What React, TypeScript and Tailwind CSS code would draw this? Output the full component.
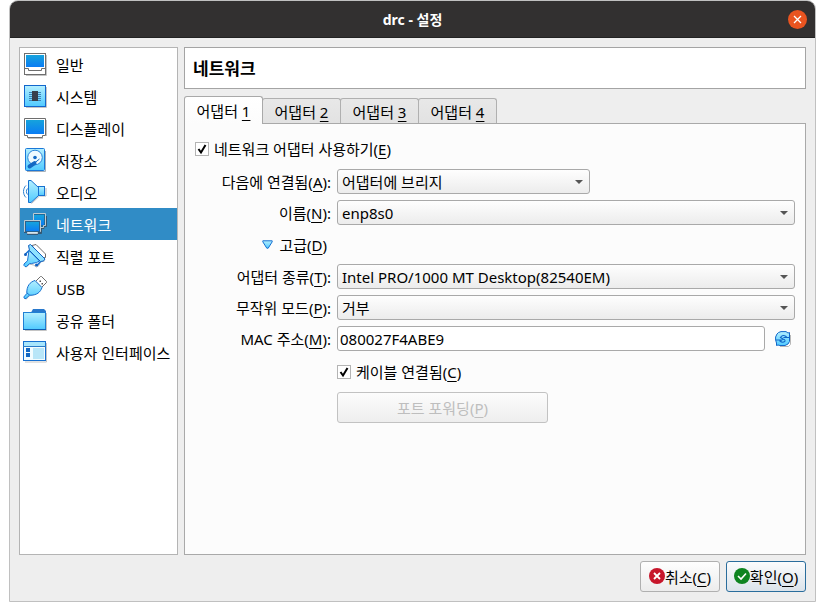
import type { ReactNode } from "react";

function Svg({ children }: { children: ReactNode }) {
  return (
    <svg viewBox="0 0 24 24" className="size-6 shrink-0" aria-hidden="true">
      {children}
    </svg>
  );
}

function Gradients() {
  return (
    <svg className="absolute size-0" aria-hidden="true">
      <defs>
        <linearGradient id="screen" x1="0" y1="0" x2="0" y2="1">
          <stop offset="0" stopColor="#16a3dc" />
          <stop offset="1" stopColor="#0a7cf4" />
        </linearGradient>
        <linearGradient id="ice" x1="0" y1="0" x2="0" y2="1">
          <stop offset="0" stopColor="#b4efff" />
          <stop offset="1" stopColor="#50caff" />
        </linearGradient>
      </defs>
    </svg>
  );
}

const GeneralIcon = () => (
  <Svg>
    <path d="M23.5 3v20.5H3" fill="none" stroke="#c4c4c4" />
    <rect x="1.5" y="1.5" width="21" height="21" fill="#fff" stroke="#6e6e6e" />
    <rect x="3" y="3" width="18" height="12" fill="url(#screen)" />
    <path d="M2 16.5h3.5v2h13v-2H22" fill="none" stroke="#6e6e6e" />
  </Svg>
);

const SystemIcon = () => (
  <Svg>
    <path d="M23.5 3v20.5H3" fill="none" stroke="#c4c4c4" />
    <rect x="1.5" y="1.5" width="21" height="21" fill="url(#ice)" stroke="#1266cc" />
    <path d="M6 8.5h12M6 10.5h12M6 12.5h12M6 14.5h12M6 16.5h12" stroke="#3b82b8" />
    <rect x="9" y="7" width="6" height="10" fill="#383f4d" />
  </Svg>
);

const DisplayIcon = () => (
  <Svg>
    <path d="M23.5 4v16M5 22.5h15" fill="none" stroke="#c4c4c4" />
    <path d="M1.5 2.5h21v17h-3v2h-15v-2h-3z" fill="#fff" stroke="#6e6e6e" />
    <rect x="3" y="4" width="18" height="14" fill="url(#screen)" />
  </Svg>
);

const StorageIcon = () => (
  <Svg>
    <path d="M22.5 3v20.5H4" fill="none" stroke="#a8b0b8" />
    <rect x="2.5" y="0.5" width="19" height="22" rx="1" fill="url(#ice)" stroke="#1a78d8" />
    <circle cx="12" cy="9.5" r="7.3" fill="#eefaff" stroke="#2a84d8" />
    <circle cx="12" cy="9.5" r="1.8" fill="#1268c4" />
    <path d="m16.5 11-5 4" stroke="#1268c4" fill="none" />
    <path d="m11.5 15.200-5 3.300" stroke="#1268c4" strokeWidth="4" strokeLinecap="round" />
  </Svg>
);

const AudioIcon = () => (
  <Svg>
    <path d="m8.500 23.500 8-7.500h6.500V8" fill="none" stroke="#b4b8bc" />
    <path d="M3 5.500c-3.300 3-3.300 9 0 12M4.500 8.500c-1.500 2-1.500 4 0 6" fill="none" stroke="#2a80d0" />
    <path d="M5.500.5H8l7.500 7v8L8 22.500H5.500z" fill="url(#ice)" stroke="#1670d0" strokeLinejoin="round" />
    <rect x="15.500" y="6.500" width="6" height="9" fill="url(#ice)" stroke="#1670d0" />
  </Svg>
);

const NetworkIcon = () => (
  <Svg>
    <path d="M23.500 4v10.500H21v2h-3M18.500 11v10.500H6" fill="none" stroke="#35576f" />
    <path d="M10.500 1.500h12v12h-2v2h-10z" fill="#1d6a9c" stroke="#bfcbd2" />
    <rect x="11" y="3" width="10" height="10" fill="url(#screen)" />
    <path d="M1 8h17v13h-3v2H4v-2H1z" fill="#33597a" />
    <path d="M1.500 8.500h16v11h-3v2h-10v-2h-3z" fill="#d4e6f0" stroke="#bfcbd2" />
    <rect x="2" y="9" width="15" height="11" fill="#2a628c" />
    <rect x="3" y="10" width="13" height="9" fill="url(#screen)" />
  </Svg>
);

const SerialIcon = () => (
  <Svg>
    <path d="m9 1.500 4-1 9.500 9.500v3.500l-4 .5z" fill="#fff" stroke="#6e6e6e" strokeLinejoin="round" />
    <path d="M3 23.500 6.500 20l4 1 3 2 2-1 2-4 4-1" fill="none" stroke="#b8b8b8" />
    <path
      d="M6 6.500 16.500 17l-3 1.500-5 1-2 .2L3.500 22.500H2l-1-1V20l3.500-3.200z"
      fill="url(#ice)"
      stroke="#1670d0"
      strokeLinejoin="round"
    />
    <path
      d="m5.500 1.500 2-1L22 15l-1.500 2-3 .5-11-11z"
      fill="#8fe2ff"
      stroke="#0f5fc0"
      strokeLinejoin="round"
    />
    <path d="M6 6.500 2.500 10M17.500 17.500l-3.500 4" stroke="#1670d0" strokeWidth="1.500" />
    <circle cx="2.500" cy="10.500" r="1.500" fill="#0f5fc0" />
    <circle cx="13.500" cy="21" r="1.500" fill="#0f5fc0" />
  </Svg>
);

const UsbIcon = () => (
  <Svg>
    <path d="m12.500 5.500 5-5h1l5 5v1l-5 5z" fill="#fff" stroke="#6e6e6e" strokeLinejoin="round" />
    <path d="M16.500 4.500H18v1.500h-1.500zM18.500 7H20v1.500h-1.500z" fill="#555" />
    <path d="M3 23.500 6 20l7-2 6-6" fill="none" stroke="#b8b8b8" />
    <path
      d="m12 4.500 7 7c-1.500 4.500-5 8-12.500 7.700l-3.500 3.300H1.500L.8 21l3-3.500C3.500 10 7 6 12 4.500z"
      fill="url(#ice)"
      stroke="#1670d0"
      strokeLinejoin="round"
    />
    <path d="m4 17 2.500 2" stroke="#1670d0" />
  </Svg>
);

const FolderIcon = () => (
  <Svg>
    <path d="M23.500 5v17.500H2" fill="none" stroke="#c4c4c4" />
    <path d="M8 4.500 10 1h11l2 2v4H8z" fill="#2878cc" />
    <rect x=".5" y="4.500" width="22" height="17" fill="url(#ice)" stroke="#2080d4" />
    <path d="M0 21.500h23" stroke="#1060b4" />
  </Svg>
);

const InterfaceIcon = () => (
  <Svg>
    <path d="M23.500 3v19H2" fill="none" stroke="#c4c4c4" />
    <rect x=".5" y="1.500" width="22" height="19" fill="#f2fcff" stroke="#1670d0" />
    <rect x="1" y="2" width="21" height="4" fill="#a8e6fc" />
    <path d="M0 6.500h23" stroke="#2a7cc8" />
    <path d="M3 8h4v4H3zM3 13h4v4H3z" fill="#1268c4" />
    <rect x="10" y="8" width="11" height="11" fill="#b8e6f8" />
  </Svg>
);

const sections = [
  { label: "일반", Icon: GeneralIcon },
  { label: "시스템", Icon: SystemIcon },
  { label: "디스플레이", Icon: DisplayIcon },
  { label: "저장소", Icon: StorageIcon },
  { label: "오디오", Icon: AudioIcon },
  { label: "네트워크", Icon: NetworkIcon, active: true },
  { label: "직렬 포트", Icon: SerialIcon },
  { label: "USB", Icon: UsbIcon },
  { label: "공유 폴더", Icon: FolderIcon },
  { label: "사용자 인터페이스", Icon: InterfaceIcon },
];

function Key({ children }: { children: string }) {
  return <span className="underline decoration-1 underline-offset-3">{children}</span>;
}

function FieldLabel({ htmlFor, text, hotkey }: { htmlFor: string; text: string; hotkey: string }) {
  return (
    <label htmlFor={htmlFor} className="whitespace-nowrap text-right">
      {text}(<Key>{hotkey}</Key>):
    </label>
  );
}

function Combo({ id, value, className }: { id: string; value: string; className: string }) {
  return (
    <div className={`relative ${className}`}>
      <select
        id={id}
        className="block h-[25px] w-full appearance-none rounded-[3px] border border-[#a9a9a9] bg-linear-to-b from-[#fefefe] to-[#ececec] pr-6 pl-1 leading-5"
      >
        <option>{value}</option>
      </select>
      <svg viewBox="0 0 8 4" className="pointer-events-none absolute top-[11px] right-[7px] h-1 w-2" aria-hidden="true">
        <path d="M0 0h8L4 4z" fill="#555" />
      </svg>
    </div>
  );
}

function Tick({ id, children }: { id: string; children: ReactNode }) {
  return (
    <div className="flex items-center gap-[5px]">
      <span className="relative size-3.5">
        <input
          id={id}
          type="checkbox"
          defaultChecked
          className="block size-3.5 appearance-none border border-[#b4b4b4] bg-white"
        />
        <svg viewBox="0 0 14 14" className="pointer-events-none absolute inset-0 size-3.5" aria-hidden="true">
          <path d="m3.500 7 2.500 3.500 4.500-7.500" fill="none" stroke="#000" strokeWidth="2" />
        </svg>
      </span>
      <label htmlFor={id} className="whitespace-nowrap">
        {children}
      </label>
    </div>
  );
}

export default function App() {
  return (
    <div className="flex min-h-screen flex-col bg-white px-[9px] pb-[9px] font-['Noto_Sans','Noto_Sans_CJK_KR',sans-serif] text-[15px] leading-5 text-black">
      <Gradients />
      <div className="flex flex-1 flex-col rounded-t-[9px] border border-[#c0c0c0] bg-[#eeeeee]">
        <header className="grid h-[37px] grid-cols-[1fr_auto_1fr] items-center rounded-t-lg border-b border-[#222] bg-[#323030] px-2 text-white">
          <h1 className="col-start-2 pt-0.5 text-sm font-bold">drc - 설정</h1>
          <button
            type="button"
            aria-label="닫기"
            className="flex size-[19px] items-center justify-center justify-self-end rounded-full bg-[#e95420]"
          >
            <svg viewBox="0 0 9 9" className="size-[9px]" aria-hidden="true">
              <path d="m1 1 7 7m0-7-7 7" stroke="#fff" strokeWidth="1.300" />
            </svg>
          </button>
        </header>

        <div className="flex flex-1 gap-1.5 px-[9px] pt-[9px]">
          <nav className="w-[159px] shrink-0 border border-[#b4b4b4] bg-white">
            <ul>
              {sections.map(({ label, Icon, active }) => (
                <li key={label}>
                  <a
                    href="#"
                    aria-current={active ? "page" : undefined}
                    className={`flex h-8 items-center gap-[9px] pl-[3px] whitespace-nowrap ${active ? "bg-[#308cc6] text-white" : ""}`}
                  >
                    <Icon />
                    <span className="pt-0.5">{label}</span>
                  </a>
                </li>
              ))}
            </ul>
          </nav>

          <main className="flex min-w-0 flex-1 flex-col">
            <h2 className="flex h-[42px] items-center border border-[#a4a4a4] bg-white px-2 pt-0.5 text-[17px] font-bold">
              네트워크
            </h2>

            <div role="tablist" className="mt-[7px] flex h-7 items-end">
              {["1", "2", "3", "4"].map((n) => (
                <button
                  key={n}
                  type="button"
                  role="tab"
                  aria-selected={n === "1"}
                  className={
                    n === "1"
                      ? "relative h-7 w-[79px] rounded-t-[3px] border border-b-0 border-[#a9a9a9] bg-linear-to-b from-white to-[#fcfcfc]"
                      : "-ml-px h-[26px] w-[79px] rounded-t-[3px] border border-[#b0b0b0] border-b-[#a9a9a9] bg-linear-to-b from-[#e8e8e8] to-[#e2e2e2] pt-0.5"
                  }
                >
                  어댑터 <Key>{n}</Key>
                </button>
              ))}
            </div>

            <section className="-mt-px flex-1 border border-[#a9a9a9] bg-[#fcfcfc] px-2.5 pt-2.5">
              <form className="grid grid-cols-[136px_1fr] items-center gap-1.5">
                <div className="col-span-2 flex h-[29px] items-center">
                  <Tick id="enable">
                    네트워크 어댑터 사용하기(<Key>E</Key>)
                  </Tick>
                </div>

                <FieldLabel htmlFor="attached" text="다음에 연결됨" hotkey="A" />
                <Combo id="attached" value="어댑터에 브리지" className="w-[253px]" />

                <FieldLabel htmlFor="name" text="이름" hotkey="N" />
                <Combo id="name" value="enp8s0" className="w-full" />

                <button type="button" className="flex h-[27px] items-center gap-1.5 justify-self-end pr-1">
                  <svg viewBox="0 0 11 9" className="h-[9px] w-[11px]" aria-hidden="true">
                    <path d="M.8.8h9.400v1L6.200 8.200H4.800L.8 1.800z" fill="url(#ice)" stroke="#1670d0" />
                  </svg>
                  <span>
                    고급(<Key>D</Key>)
                  </span>
                </button>
                <span />

                <FieldLabel htmlFor="kind" text="어댑터 종류" hotkey="T" />
                <Combo id="kind" value="Intel PRO/1000 MT Desktop(82540EM)" className="w-full" />

                <FieldLabel htmlFor="promiscuous" text="무작위 모드" hotkey="P" />
                <Combo id="promiscuous" value="거부" className="w-full" />

                <FieldLabel htmlFor="mac" text="MAC 주소" hotkey="M" />
                <div className="flex gap-1.5">
                  <input
                    id="mac"
                    type="text"
                    defaultValue="080027F4ABE9"
                    className="h-[25px] min-w-0 flex-1 rounded-[3px] border border-[#a9a9a9] bg-white px-0.5"
                  />
                  <button type="button" aria-label="새 MAC 주소" className="flex w-6 items-center justify-center">
                    <svg viewBox="0 0 16 16" className="size-4" aria-hidden="true">
                      <path d="M15.500 4v9.500l-2 2H5" fill="none" stroke="#b8b8b8" />
                      <path
                        d="M3.500 1.500 6 .6h5l2 1.400 1.500-.5v9L13 13l-3 1.500H5L3 14l-1.500.5V12L.6 9V6L2 3z"
                        fill="url(#ice)"
                        stroke="#1268c8"
                      />
                      <path
                        d="M1 9h5.500l-1.500 1c2 2 4 1.500 5.500-.5M14.500 6.500h-5l1.500-1C9 4 7 4 5.500 6.500L8 8l2 1"
                        fill="none"
                        stroke="#1268c8"
                        strokeWidth="1.200"
                      />
                    </svg>
                  </button>
                </div>

                <div className="col-start-2 flex h-[29px] items-center">
                  <Tick id="cable">
                    케이블 연결됨(<Key>C</Key>)
                  </Tick>
                </div>

                <button
                  type="button"
                  disabled
                  className="col-start-2 h-[31px] w-[211px] rounded-[3px] border border-[#c2c2c2] bg-linear-to-b from-[#fcfcfc] to-[#eeeeee] text-[#bebebe]"
                >
                  포트 포워딩(<Key>P</Key>)
                </button>
              </form>
            </section>
          </main>
        </div>

        <footer className="flex justify-end gap-1.5 px-[9px] pt-1.5 pb-[9px]">
          <button
            type="button"
            className="flex h-[31px] w-20 items-center justify-center rounded-[3px] border border-[#b0b0b0] bg-linear-to-b from-[#fefefe] to-[#ececec] whitespace-nowrap"
          >
            <svg viewBox="0 0 16 16" className="mb-0.5 size-4 shrink-0" aria-hidden="true">
              <circle cx="8" cy="8" r="8" fill="#c7162b" />
              <path d="m5 5 6 6m0-6-6 6" stroke="#fff" strokeWidth="1.800" />
            </svg>
            <span>
              취소(<Key>C</Key>)
            </span>
          </button>
          <button
            type="button"
            className="flex h-[31px] w-20 items-center justify-center rounded-[3px] border border-[#2a6d9c] bg-linear-to-b from-[#fbfcfd] to-[#dbe3ea] whitespace-nowrap"
          >
            <svg viewBox="0 0 16 16" className="mb-0.5 size-4 shrink-0" aria-hidden="true">
              <circle cx="8" cy="8" r="8" fill="#0e8420" />
              <path d="m4 8 3 3 5-5.500" fill="none" stroke="#fff" strokeWidth="1.600" />
            </svg>
            <span>
              확인(<Key>O</Key>)
            </span>
          </button>
        </footer>
      </div>
    </div>
  );
}
